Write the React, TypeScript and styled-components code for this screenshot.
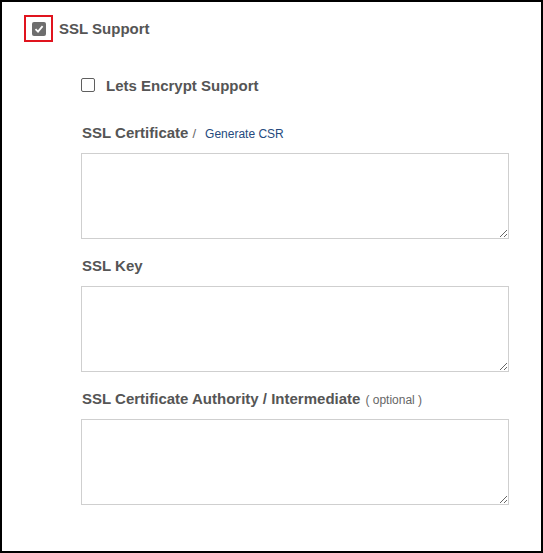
import React from 'react'
import styled, { createGlobalStyle } from 'styled-components'

const GlobalStyle = createGlobalStyle`
  html, body {
    margin: 0;
    padding: 0;
    background: #fff;
  }
  body {
    font-family: 'Liberation Sans', Arial, sans-serif;
  }
`

const Frame = styled.div`
  box-sizing: border-box;
  width: 543px;
  height: 553px;
  border: 2px solid #000;
  padding: 13px 0 0 22px;
  display: flex;
  flex-direction: column;
`

const TopRow = styled.div`
  display: flex;
  align-items: center;
  gap: 6px;
  height: 27px;
`

const Highlight = styled.div`
  box-sizing: border-box;
  width: 29px;
  height: 27px;
  border: 2px solid #e0141e;
  display: flex;
  align-items: center;
  justify-content: center;
`

const Box = styled.span<{ $checked?: boolean }>`
  box-sizing: border-box;
  width: 14px;
  height: 14px;
  border-radius: 2px;
  display: inline-flex;
  align-items: center;
  justify-content: center;
  flex-shrink: 0;
  background: ${(p) => (p.$checked ? '#6e6e6e' : '#fff')};
  border: ${(p) => (p.$checked ? 'none' : '1px solid #5f5f5f')};
`

const Title = styled.span`
  font-size: 15px;
  font-weight: bold;
  color: #555;
`

const Section = styled.div`
  display: flex;
  flex-direction: column;
  padding-left: 57px;
  margin-top: 33px;
  width: 428px;
`

const CheckRow = styled.label`
  display: flex;
  align-items: center;
  gap: 11px;
  height: 20px;
  margin-bottom: 28px;
`

const Field = styled.div`
  display: flex;
  flex-direction: column;
  gap: 10px;
  margin-bottom: 17px;
`

const Label = styled.div`
  display: flex;
  align-items: baseline;
  height: 20px;
  line-height: 20px;
  font-size: 15px;
  font-weight: bold;
  color: #555;
  padding-left: 1px;
`

const Slash = styled.span`
  font-weight: normal;
  font-size: 13px;
  color: #666;
  margin: 0 9px 0 4px;
`

const Link = styled.a`
  font-weight: normal;
  font-size: 12px;
  color: #254a7e;
  text-decoration: none;
`

const Hint = styled.span`
  font-weight: normal;
  font-size: 12px;
  color: #666;
  margin-left: 5px;
`

const Area = styled.textarea`
  box-sizing: border-box;
  width: 428px;
  height: 86px;
  border: 1px solid #cfcfcf;
  border-radius: 0;
  background: #fff;
  font-family: 'Liberation Sans', Arial, sans-serif;
  outline: none;
`

const Check = () => (
  <svg width="10" height="10" viewBox="0 0 10 10">
    <path d="M1.5 5.2 L4 7.6 L8.6 2.2" stroke="#fff" strokeWidth="1.8" fill="none" />
  </svg>
)

const App: React.FC = () => {
  return (
    <>
      <GlobalStyle />
      <Frame>
        <TopRow>
          <Highlight>
            <Box $checked>
              <Check />
            </Box>
          </Highlight>
          <Title>SSL Support</Title>
        </TopRow>
        <Section>
          <CheckRow>
            <Box />
            <Title>Lets Encrypt Support</Title>
          </CheckRow>
          <Field>
            <Label>
              SSL Certificate<Slash>/</Slash>
              <Link href="#">Generate CSR</Link>
            </Label>
            <Area />
          </Field>
          <Field>
            <Label>SSL Key</Label>
            <Area />
          </Field>
          <Field>
            <Label>
              SSL Certificate Authority / Intermediate<Hint>( optional )</Hint>
            </Label>
            <Area />
          </Field>
        </Section>
      </Frame>
    </>
  )
}

export default App
